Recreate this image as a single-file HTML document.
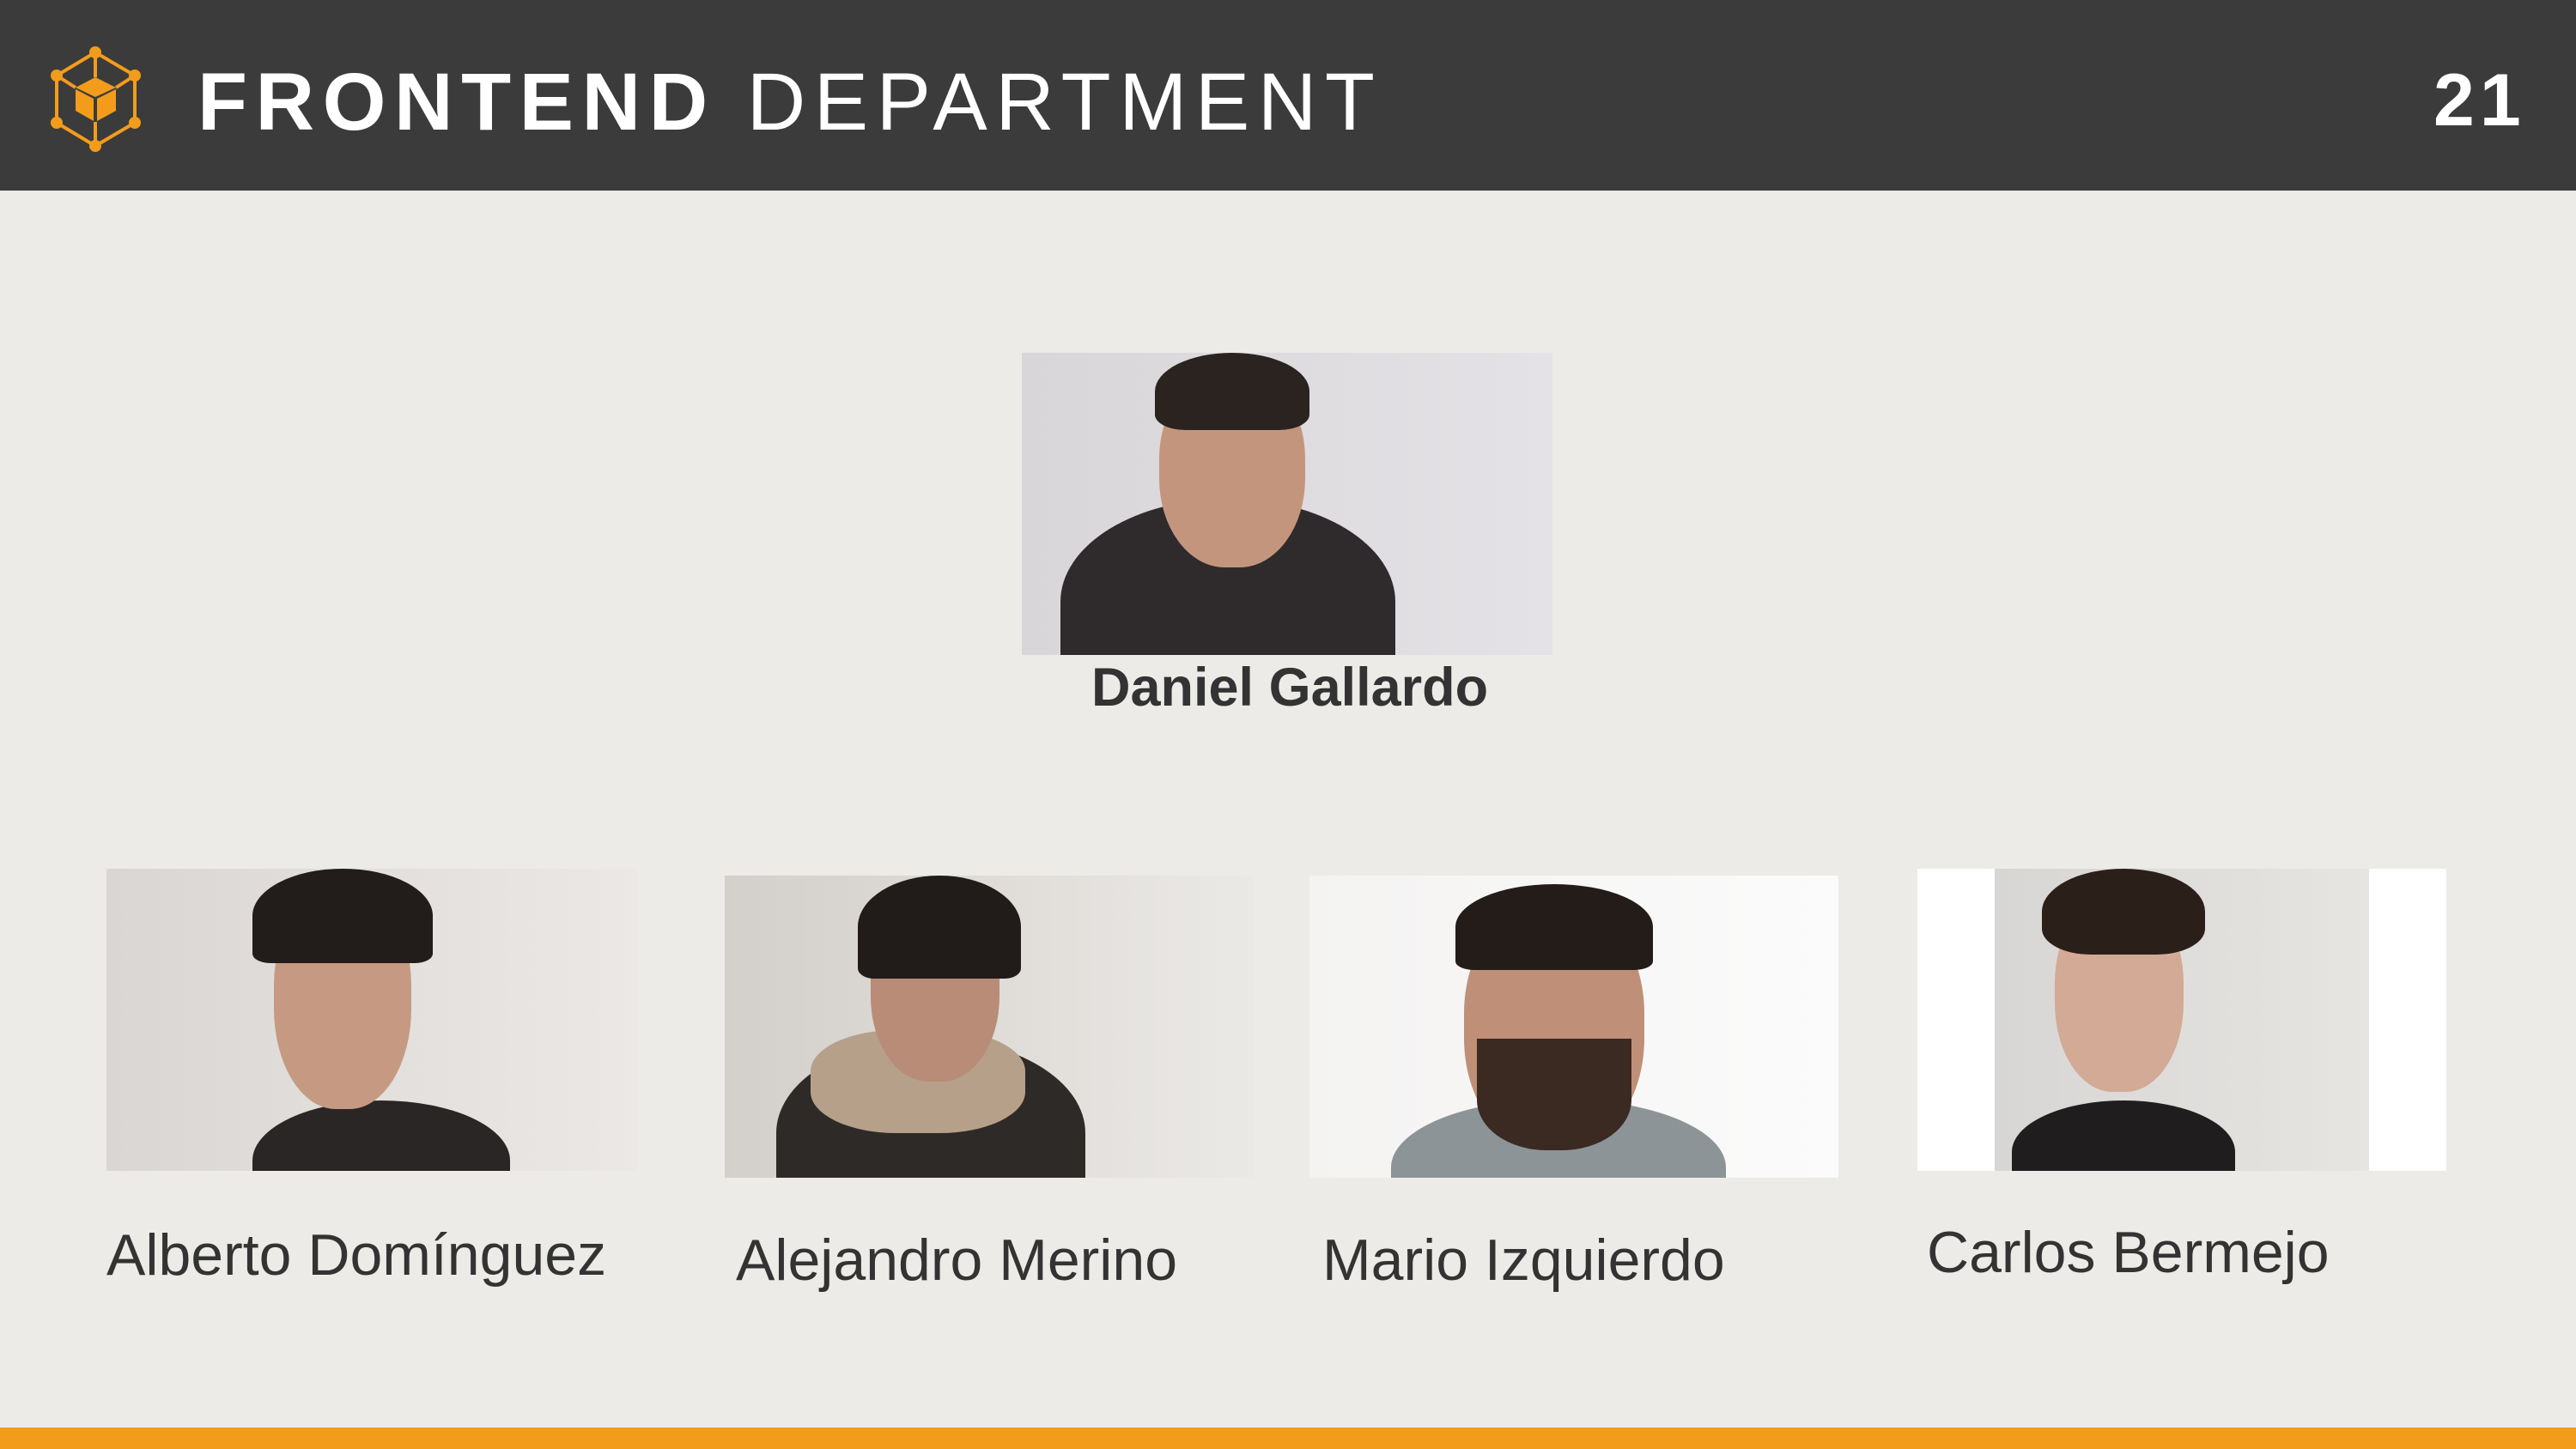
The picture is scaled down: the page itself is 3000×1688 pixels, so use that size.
<!DOCTYPE html>
<html><head><meta charset="utf-8"><style>
html,body{margin:0;padding:0}
body{width:3000px;height:1688px;background:#ecebe7;position:relative;overflow:hidden;font-family:"Liberation Sans",sans-serif;color:#333}
.hdr{position:absolute;left:0;top:0;width:3000px;height:222px;background:#3b3b3b}
.title{position:absolute;left:230px;top:72px;font-size:95px;color:#fff;letter-spacing:9.5px;line-height:1;white-space:nowrap}
.num{position:absolute;left:2834px;top:74px;font-size:86px;color:#fff;font-weight:bold;letter-spacing:6px;line-height:1}
.ph{position:absolute;background:#ddd;overflow:hidden}
.nm{position:absolute;font-size:68px;line-height:1;white-space:nowrap;color:#333}
.bar{position:absolute;left:0;top:1663px;width:3000px;height:25px;background:#f39c1c}
</style></head><body>
<div class="hdr">
<svg style="position:absolute;left:0;top:0" width="200" height="222" viewBox="0 0 200 222">
<g stroke="#f39c1c" stroke-width="4" fill="none">
<polygon points="111,61 157,88 157,143 111,170 66,143 66,88"/>
<line x1="111" y1="61" x2="111" y2="90"/>
<line x1="66" y1="88" x2="88" y2="102"/>
<line x1="157" y1="88" x2="135" y2="102"/>
<line x1="111" y1="142" x2="111" y2="170"/>
</g>
<g fill="#f39c1c">
<polygon points="111,90 135,102 111,113 88,102"/>
<polygon points="88,104 109,115 109,141 88,129"/>
<polygon points="135,104 113,115 113,141 135,129"/>
<circle cx="111" cy="61" r="7"/><circle cx="157" cy="88" r="7"/><circle cx="157" cy="143" r="7"/>
<circle cx="111" cy="170" r="7"/><circle cx="66" cy="143" r="7"/><circle cx="66" cy="88" r="7"/>
</g></svg>
<div class="title"><b>FRONTEND</b> DEPARTMENT</div>
<div class="num">21</div>
</div>

<div class="ph" style="left:1190px;top:411px;width:618px;height:352px;background:linear-gradient(90deg,#d8d6d8,#e4e2e6)">
<div style="position:absolute;left:45px;top:170px;width:390px;height:240px;border-radius:50% 50% 0 0;background:#2f2b2d"></div>
<div style="position:absolute;left:160px;top:20px;width:170px;height:230px;border-radius:45%;background:#c4957d"></div>
<div style="position:absolute;left:155px;top:0px;width:180px;height:90px;border-radius:50% 50% 20% 20%;background:#2a2320"></div>
</div>
<div class="nm" style="left:1271px;top:770px;font-weight:bold;font-size:63px">Daniel Gallardo</div>

<div class="ph" style="left:124px;top:1012px;width:618px;height:352px;background:linear-gradient(90deg,#d9d6d3,#ebe8e6)">
<div style="position:absolute;left:170px;top:270px;width:300px;height:140px;border-radius:50% 50% 0 0;background:#2a2626"></div>
<div style="position:absolute;left:195px;top:20px;width:160px;height:260px;border-radius:45%;background:#c69a82"></div>
<div style="position:absolute;left:170px;top:0px;width:210px;height:110px;border-radius:50% 50% 10% 10%;background:#221c1b"></div>
</div>
<div class="ph" style="left:844px;top:1020px;width:616px;height:352px;background:linear-gradient(90deg,#d3cfca,#ebe9e6)">
<div style="position:absolute;left:60px;top:190px;width:360px;height:220px;border-radius:50% 50% 0 0;background:#2e2a27"></div>
<div style="position:absolute;left:100px;top:180px;width:250px;height:120px;border-radius:40%;background:#b6a08a"></div>
<div style="position:absolute;left:170px;top:20px;width:150px;height:220px;border-radius:45%;background:#b88c76"></div>
<div style="position:absolute;left:155px;top:0px;width:190px;height:120px;border-radius:50% 50% 10% 10%;background:#211b19"></div>
</div>
<div class="ph" style="left:1525px;top:1020px;width:616px;height:352px;background:linear-gradient(90deg,#f4f3f2,#fbfbfb)">
<div style="position:absolute;left:95px;top:260px;width:390px;height:160px;border-radius:50% 50% 0 0;background:#8c9498"></div>
<div style="position:absolute;left:180px;top:30px;width:210px;height:290px;border-radius:45%;background:#c08f78"></div>
<div style="position:absolute;left:195px;top:190px;width:180px;height:130px;border-radius:0 0 45% 45%;background:#3a2a22"></div>
<div style="position:absolute;left:170px;top:10px;width:230px;height:100px;border-radius:50% 50% 10% 10%;background:#231c19"></div>
</div>
<div class="ph" style="left:2233px;top:1012px;width:616px;height:352px;background:#fff">
<div style="position:absolute;left:90px;top:0;width:436px;height:352px;background:linear-gradient(90deg,#d8d6d4,#e7e5e2)">
<div style="position:absolute;left:20px;top:270px;width:260px;height:120px;border-radius:50% 50% 0 0;background:#1f1d1e"></div>
<div style="position:absolute;left:70px;top:30px;width:150px;height:230px;border-radius:45%;background:#d2aa95"></div>
<div style="position:absolute;left:55px;top:0;width:190px;height:100px;border-radius:50% 50% 30% 30%;background:#2b1f1a"></div>
</div></div>

<div class="nm" style="left:124px;top:1428px">Alberto Domínguez</div>
<div class="nm" style="left:857px;top:1434px">Alejandro Merino</div>
<div class="nm" style="left:1540px;top:1434px">Mario Izquierdo</div>
<div class="nm" style="left:2244px;top:1425px">Carlos Bermejo</div>
<div class="bar"></div>
</body></html>
